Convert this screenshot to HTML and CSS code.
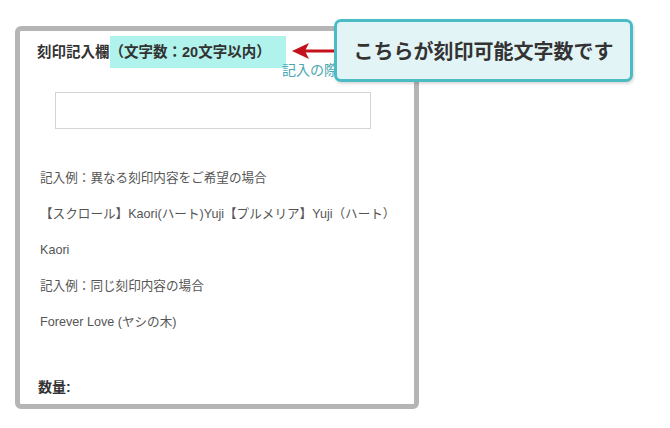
FILE: index.html
```html
<!DOCTYPE html>
<html lang="ja">
<head>
    <meta charset="UTF-8">
    <meta name="viewport" content="width=device-width, initial-scale=1.0">
    <title>刻印記入欄</title>
    <link rel="stylesheet" href="styles.css">
</head>
<body>
    <div class="page">
        <div class="form-card">
            <h3 class="field-title">刻印記入欄<span class="limit">（文字数：20文字以内）</span></h3>
            <div class="field-note"><a href="#">記入の際の注意点</a></div>
            <input class="engrave-input" type="text">

            <p class="example">記入例：異なる刻印内容をご希望の場合</p>
            <p class="example">【スクロール】Kaori(ハート)Yuji【プルメリア】Yuji（ハート）</p>
            <p class="example">Kaori</p>
            <p class="example">記入例：同じ刻印内容の場合</p>
            <p class="example">Forever Love (ヤシの木)</p>

            <div class="qty">数量:</div>
        </div>

        <!-- 注釈: 矢印と吹き出し -->
        <svg class="arrow" width="60" height="20" viewBox="0 0 60 20">
            <line x1="12" y1="10" x2="58" y2="10" stroke="#fff" stroke-width="8"/>
            <line x1="12" y1="10" x2="55" y2="10" stroke="#c4121c" stroke-width="3"/>
            <path d="M2 10 L19 2 L15 10 L19 18 Z" fill="#c4121c"/>
        </svg>
        <div class="callout">こちらが刻印可能文字数です</div>
    </div>
</body>
</html>
```

FILE: styles.css
```css
body {
    margin: 0;
    background-color: #fff;
    font-family: "Liberation Sans", "Noto Sans CJK JP", sans-serif;
    color: #555;
}

.page {
    position: relative;
    width: 670px;
    height: 428px;
    padding: 26px 0 0 15px;
    box-sizing: border-box;
}

.form-card {
    width: 404px;
    height: 383px;
    border: 5px solid #b5b5b5;
    border-radius: 6px;
    padding: 0 18px;
    box-sizing: border-box;
}

.field-title {
    margin: 5px 0 0 -1px;
    font-size: 14.5px;
    line-height: 32px;
    font-weight: bold;
    color: #333;
}

.limit {
    display: inline-block;
    background-color: #b0f2ec;
    padding-right: 15px;
}

.field-note {
    margin-top: -7px;
    padding-right: 2px;
    text-align: right;
    font-size: 14px;
    line-height: 18px;
}

.field-note a {
    color: #4ba7b3;
    text-decoration: none;
}

.engrave-input {
    display: block;
    width: 316px;
    height: 37px;
    margin: 13px 0 40px 17px;
    border: 1px solid #d4d4d4;
    box-sizing: border-box;
}

.example {
    margin: 18px 0;
    padding-left: 2px;
    font-size: 12.6px;
    line-height: 18px;
}

.qty {
    margin-top: 46px;
    font-size: 14px;
    line-height: 20px;
    font-weight: bold;
    color: #333;
}

/* 注釈 */
.arrow {
    position: absolute;
    left: 290px;
    top: 41px;
}

.callout {
    position: absolute;
    left: 334px;
    top: 19px;
    width: 299px;
    height: 63px;
    border: 3px solid #4bbcc3;
    border-radius: 7px;
    background-color: #e3f4f6;
    box-shadow: 1px 2px 3px rgba(0, 0, 0, 0.15);
    box-sizing: border-box;
    display: flex;
    justify-content: center;
    align-items: center;
    font-size: 20px;
    font-weight: bold;
    color: #333;
}
```
